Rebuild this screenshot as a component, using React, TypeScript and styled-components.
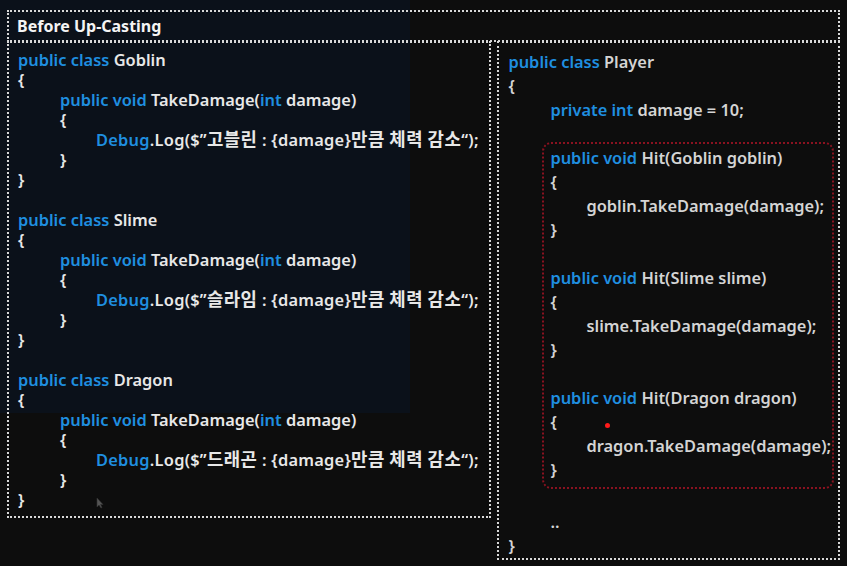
import React from "react";
import styled, { createGlobalStyle } from "styled-components";

const Global = createGlobalStyle`
  html, body { margin: 0; padding: 0; }
  body {
    width: 847px;
    height: 566px;
    overflow: hidden;
    background:
      linear-gradient(#0b111a, #0b111a) 0 0 / 410px 413px no-repeat,
      #0d0d0d;
    font-family: "Noto Sans", "Noto Sans CJK KR", sans-serif;
  }
`;

const Page = styled.div`
  position: relative;
  width: 847px;
  height: 566px;
  box-sizing: border-box;
  padding: 10px 7px 0 7px;
  display: flex;
  flex-direction: column;
`;

const TitleBox = styled.div`
  height: 32px;
  box-sizing: border-box;
  border: 2px dotted #d8d8d8;
  display: flex;
  align-items: center;
  padding-left: 8px;
  color: #f4f4f4;
  font-weight: 700;
  font-size: 16px;
`;

const Columns = styled.div`
  display: flex;
  gap: 6px;
  margin-top: -1px;
  align-items: flex-start;
`;

const Panel = styled.div<{ $w: number; $h: number; $pt: number; $lh: number }>`
  width: ${(p) => p.$w}px;
  height: ${(p) => p.$h}px;
  box-sizing: border-box;
  border: 2px dotted #d8d8d8;
  padding: ${(p) => p.$pt}px 0 0 9px;
  display: flex;
  flex-direction: column;
  font-size: 16.4px;
  font-weight: 600;
  line-height: ${(p) => p.$lh}px;
  --lh: ${(p) => p.$lh}px;
`;

const Line = styled.div<{ $indent: number; $tone?: "bright" | "dim"; $wide?: boolean }>`
  flex-shrink: 0;
  height: var(--lh);
  padding-left: ${(p) => p.$indent}px;
  white-space: pre;
  letter-spacing: ${(p) => (p.$wide ? "0.25px" : "normal")};
  color: ${(p) => (p.$tone === "dim" ? "#d4d4d4" : "#e8e8e8")};
`;

const Blank = styled.div<{ $h: number }>`
  flex-shrink: 0;
  height: ${(p) => p.$h}px;
`;

const Kw = styled.span`
  color: #1f8fe0;
`;

const Hangul = styled.span`
  font-family: "Noto Sans CJK KR", sans-serif;
  font-weight: 700;
  font-size: 17.8px;
  line-height: 1;
  letter-spacing: 0.5px;
`;

const Highlight = styled.div`
  flex-shrink: 0;
  margin-left: 34px;
  margin-top: 20px;
  width: 292px;
  height: 347px;
  box-sizing: border-box;
  border: 2px dotted #8a1220;
  border-radius: 9px;
  padding: 2px 0 0 6px;
  display: flex;
  flex-direction: column;
`;

const RedDot = styled.div`
  position: absolute;
  left: 605px;
  top: 423px;
  width: 5px;
  height: 5px;
  border-radius: 50%;
  background: #ff1a1a;
`;

const Cursor = styled.svg`
  position: absolute;
  left: 96px;
  top: 497px;
`;

const I1 = 42;
const I2 = 78;

const EnemyClass = ({ name, msg }: { name: string; msg: string }) => (
  <>
    <Line $indent={0}>
      <Kw>public class</Kw> {name}
    </Line>
    <Line $indent={0}>{"{"}</Line>
    <Line $indent={I1}>
      <Kw>public void</Kw> TakeDamage(<Kw>int</Kw> damage)
    </Line>
    <Line $indent={I1}>{"{"}</Line>
    <Line $indent={I2} $wide>
      <Kw>Debug</Kw>.Log($”<Hangul>{msg}</Hangul> : {"{damage}"}
      <Hangul>만큼 체력 감소</Hangul>“);
    </Line>
    <Line $indent={I1}>{"}"}</Line>
    <Line $indent={0}>{"}"}</Line>
  </>
);

const HitMethod = ({ type, arg }: { type: string; arg: string }) => (
  <>
    <Line $indent={0} $tone="dim">
      <Kw>public void</Kw> Hit({type} {arg})
    </Line>
    <Line $indent={0} $tone="dim">{"{"}</Line>
    <Line $indent={36} $tone="dim">
      {arg}.TakeDamage(damage);
    </Line>
    <Line $indent={0} $tone="dim">{"}"}</Line>
  </>
);

export default function App() {
  return (
    <>
      <Global />
      <Page>
        <TitleBox>Before Up-Casting</TitleBox>
        <Columns>
          <Panel $w={485} $h={477} $pt={7} $lh={20}>
            <EnemyClass name="Goblin" msg="고블린" />
            <Blank $h={20} />
            <EnemyClass name="Slime" msg="슬라임" />
            <Blank $h={20} />
            <EnemyClass name="Dragon" msg="드래곤" />
          </Panel>
          <Panel $w={343} $h={519} $pt={7} $lh={24}>
            <Line $indent={0} $tone="dim">
              <Kw>public class</Kw> Player
            </Line>
            <Line $indent={0} $tone="dim">{"{"}</Line>
            <Line $indent={I1} $tone="dim">
              <Kw>private int</Kw> damage = 10;
            </Line>
            <Highlight>
              <HitMethod type="Goblin" arg="goblin" />
              <Blank $h={24} />
              <HitMethod type="Slime" arg="slime" />
              <Blank $h={24} />
              <HitMethod type="Dragon" arg="dragon" />
            </Highlight>
            <Blank $h={21} />
            <Line $indent={I1} $tone="dim">..</Line>
            <Line $indent={0} $tone="dim">{"}"}</Line>
          </Panel>
        </Columns>
        <RedDot />
        <Cursor width="8" height="12" viewBox="0 0 8 12">
          <path d="M1 1 L1 10 L3 8 L5 11 L6 10.5 L4.5 7.5 L7 7.5 Z" fill="#555" stroke="#333" strokeWidth="0.6" />
        </Cursor>
      </Page>
    </>
  );
}
